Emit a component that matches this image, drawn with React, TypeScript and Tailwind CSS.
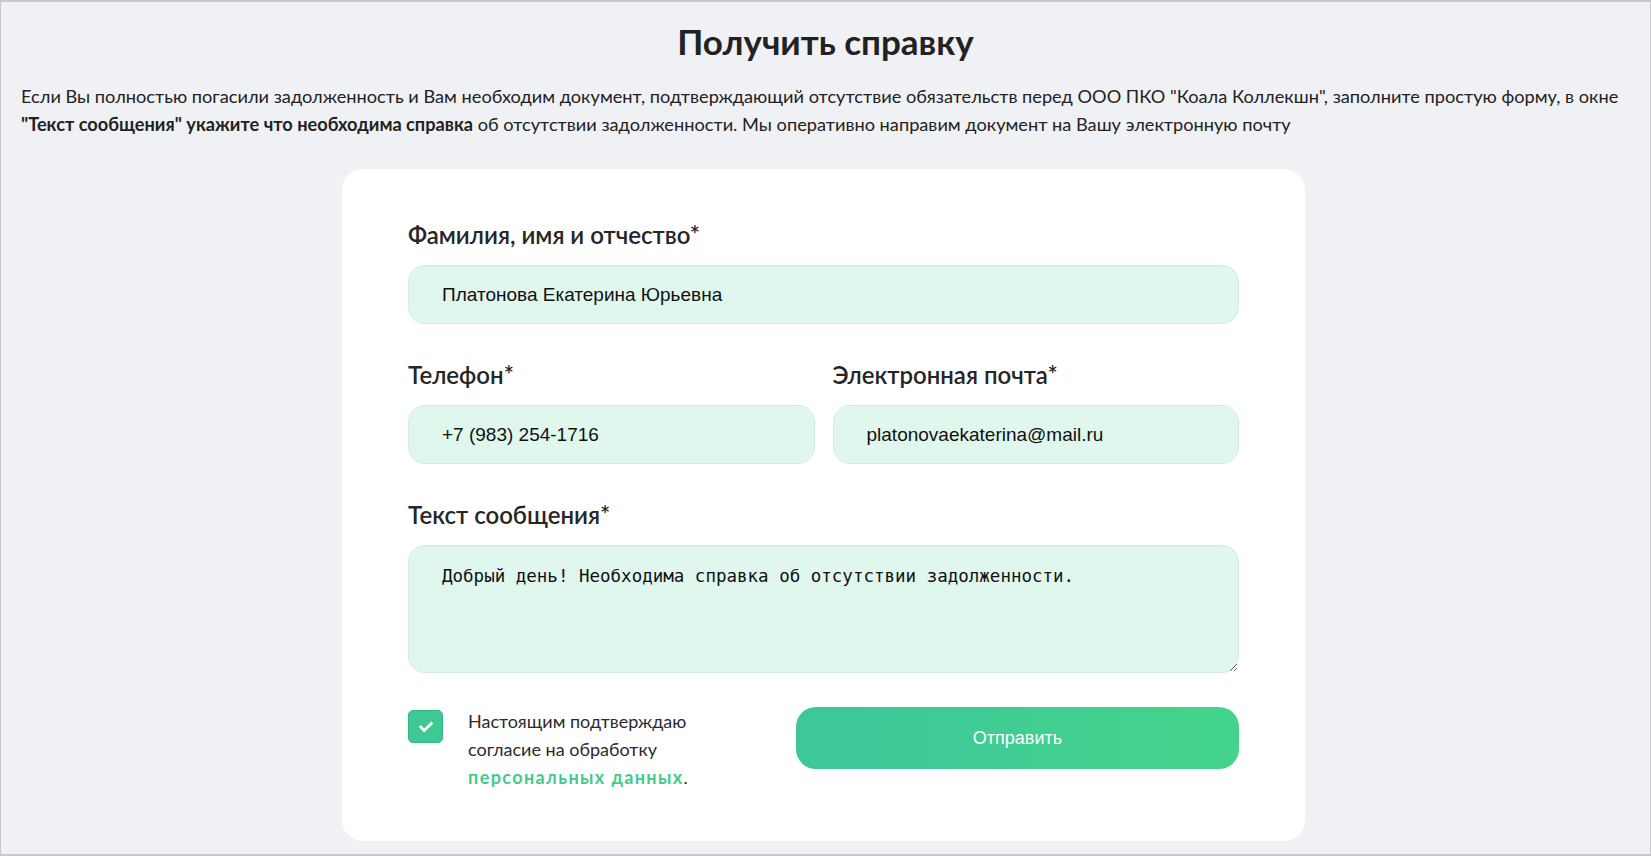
import { FaCheck } from 'react-icons/fa';

const inputCls =
  'w-full h-[59px] rounded-[17px] border border-[#d5ebe2] bg-[#e0f7ee] px-[33px] text-[19px] text-[#111] outline-none font-["Liberation_Sans",Arial,sans-serif]';

const labelCls = 'block text-[24px] leading-[28px] font-semibold text-[#262626] mb-[16px]';

export default function App() {
  return (
    <div className='min-h-screen bg-[#f0f1f5] border border-[#c6c7cb] border-t-2 border-b-2 px-[20px] pt-[17px] pb-[13px] font-["Lato","Noto_Sans",sans-serif]'>
      {/* Heading */}
      <h1 className="text-center text-[35px] leading-[44px] font-bold text-[#222]">Получить справку</h1>
      <p className="mt-[19px] text-[18.2px] leading-[28px] text-[#222]">
        Если Вы полностью погасили задолженность и Вам необходим документ, подтверждающий отсутствие обязательств перед ООО ПКО "Коала Коллекшн", заполните простую форму, в окне{' '}
        <b className="font-bold">"Текст сообщения" укажите что необходима справка</b> об отсутствии задолженности. Мы оперативно направим документ на Вашу электронную почту
      </p>

      {/* Form card */}
      <div className="mt-[31px] pr-[4px]">
        <div className="mx-auto w-[963px] rounded-[21px] bg-white px-[66px] pt-[52px] pb-[50px]">
          <label className={labelCls}>Фамилия, имя и отчество*</label>
          <input className={inputCls} defaultValue="Платонова Екатерина Юрьевна" />

          <div className="mt-[37px] grid grid-cols-2 gap-[18px]">
            <div>
              <label className={labelCls}>Телефон*</label>
              <input className={inputCls} defaultValue="+7 (983) 254-1716" />
            </div>
            <div>
              <label className={labelCls}>Электронная почта*</label>
              <input className={inputCls} defaultValue="platonovaekaterina@mail.ru" />
            </div>
          </div>

          <label className={labelCls + ' mt-[37px]'}>Текст сообщения*</label>
          <textarea
            className='block w-full h-[128px] rounded-[17px] border border-[#d5ebe2] bg-[#e0f7ee] px-[33px] pt-[18px] text-[17.5px] leading-[24px] text-[#111] outline-none font-["DejaVu_Sans_Mono",monospace]'
            defaultValue="Добрый день! Необходима справка об отсутствии задолженности."
          />

          <div className="mt-[34px] flex items-start justify-between">
            <div className="flex items-start gap-[25px] pt-[3px]">
              <span className="flex h-[33px] w-[35px] items-center justify-center rounded-[5px] border border-[#33b582] bg-[#3ec994] text-white">
                <FaCheck size={14} />
              </span>
              <p className="-mt-[3px] text-[18px] leading-[28px] text-[#2b2b2b]">
                Настоящим подтверждаю
                <br />
                согласие на обработку
                <br />
                <span className="font-bold tracking-[1.4px] text-[#45c98d]">персональных данных</span>.
              </p>
            </div>
            <button className='h-[62px] w-[443px] rounded-[20px] bg-gradient-to-r from-[#3dc69b] to-[#43d48a] text-[18px] text-white font-["Liberation_Sans",Arial,sans-serif]'>
              Отправить
            </button>
          </div>
        </div>
      </div>
    </div>
  );
}
